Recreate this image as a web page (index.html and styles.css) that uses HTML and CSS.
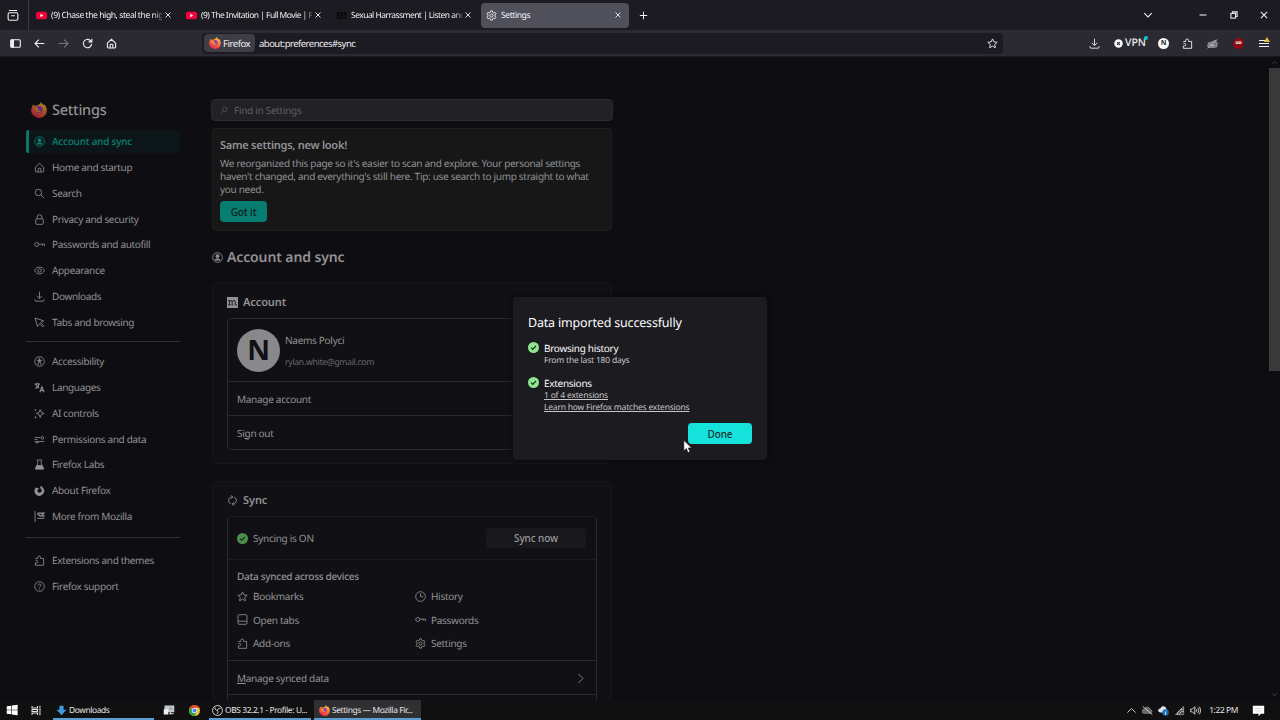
FILE: index.html
```html
<!DOCTYPE html>
<html lang="en">
<head>
    <meta charset="UTF-8">
    <meta name="viewport" content="width=device-width, initial-scale=1.0">
    <title>Settings</title>
    <link rel="stylesheet" href="styles.css">
</head>
<body>
    <svg class="sprite" width="0" height="0">
        <defs>
            <linearGradient id="fox-fill" x1="0.8" y1="0" x2="0.3" y2="1">
                <stop offset="0" stop-color="#ffd93a"/>
                <stop offset="0.45" stop-color="#ff7a2a"/>
                <stop offset="1" stop-color="#e8204e"/>
            </linearGradient>
        </defs>
        <symbol id="close" viewBox="0 0 16 16"><path d="M3 3l10 10M13 3L3 13"/></symbol>
        <symbol id="gear" viewBox="0 0 16 16"><path d="M6.800 1.200h2.400l.5 2 1.600.9 2-.6 1.200 2.100-1.400 1.500v1.800l1.400 1.500-1.200 2.100-2-.6-1.600.9-.5 2H6.800l-.5-2-1.600-.9-2 .6-1.200-2.100 1.400-1.500V7.100L1.500 5.600l1.200-2.100 2 .6 1.600-.9z"/><circle cx="8" cy="8" r="2.300"/></symbol>
        <symbol id="youtube" viewBox="0 0 16 16"><rect x="0" y="2.500" width="16" height="11" rx="3" fill="#f5003c" stroke="none"/><path d="M6.400 5.600v4.800L10.600 8z" fill="#fff" stroke="none"/></symbol>
        <symbol id="home" viewBox="0 0 16 16"><path d="M2 7.500L8 1.800l6 5.700v5.700a1.300 1.300 0 0 1-1.300 1.300H3.300A1.300 1.300 0 0 1 2 13.200zM6 14.500V10a1 1 0 0 1 1-1h2a1 1 0 0 1 1 1v4.500"/></symbol>
        <symbol id="search" viewBox="0 0 16 16"><circle cx="6.500" cy="6.500" r="4.700"/><path d="M10 10l5 5"/></symbol>
        <symbol id="search-flip" viewBox="0 0 16 16"><circle cx="9.500" cy="6.500" r="4.500"/><path d="M6 10l-4.500 4.500"/></symbol>
        <symbol id="lock" viewBox="0 0 16 16"><rect x="2.500" y="7" width="11" height="8" rx="1.500"/><path d="M4.500 7V4.500a3.500 3.500 0 0 1 7 0V7"/></symbol>
        <symbol id="key" viewBox="0 0 16 16"><circle cx="4" cy="8" r="2.900"/><path d="M7 7.500h8.500v3M12.500 7.500v2"/></symbol>
        <symbol id="eye" viewBox="0 0 16 16"><path d="M.8 8C2.500 4.600 5 3 8 3s5.500 1.600 7.200 5c-1.700 3.400-4.200 5-7.200 5S2.500 11.400.8 8z"/><circle cx="8" cy="8" r="2.500"/></symbol>
        <symbol id="download" viewBox="0 0 16 16"><path d="M8 1v9.500M4 7l4 4 4-4M1.500 12v1.500a1.300 1.300 0 0 0 1.300 1.300h10.400a1.300 1.300 0 0 0 1.300-1.300V12"/></symbol>
        <symbol id="pointer" viewBox="0 0 16 16"><path d="M1.500 1.500l12.500 4-4.500 2.700 4.700 4.700-1.600 1.600-4.700-4.700L5 14z"/></symbol>
        <symbol id="person" viewBox="0 0 16 16"><circle cx="8" cy="8" r="7"/><circle cx="8" cy="6" r="2.200" fill="currentColor"/><path d="M4 12.300c0-1.800 1-2.800 2.400-2.800h3.200c1.400 0 2.400 1 2.400 2.800z" fill="currentColor" stroke="none"/></symbol>
        <symbol id="access" viewBox="0 0 16 16"><circle cx="8" cy="8" r="7"/><circle cx="8" cy="4.300" r=".8" fill="currentColor"/><path d="M4 6.300h8M6.700 6.500v3L5.500 13M9.300 6.500v3l1.200 3.500M8 6v3.500"/></symbol>
        <symbol id="lang" viewBox="0 0 16 16"><path d="M.8 3h8M4.800 1v2M2 9.500C5 8 6.800 6 7.300 3M2.500 3.500C3.500 6 5 7.500 7 9M8.500 15l3-8 3.200 8M9.500 12.400h4.200" stroke-width="1.600"/></symbol>
        <symbol id="spark" viewBox="0 0 16 16"><path d="M9 2.500l1.400 3.800L14.800 8l-4.400 1.700L9 13.800 7.400 9.700 3.500 8l3.900-1.700z"/><path d="M1 3h2M2 2v2M1 13.500h2.500M2.200 12.300v2.500"/></symbol>
        <symbol id="perms" viewBox="0 0 16 16"><path d="M1 5h8M1 11h14M1 8h4"/><circle cx="12.200" cy="5.500" r="2"/><path d="M3 11v1.800h3V11"/></symbol>
        <symbol id="flask" viewBox="0 0 16 16"><path d="M4 1.500h8M5.500 2v5L2 13.500V14.500h12v-1L10.500 7V2"/><path d="M4.500 9.500h7l2.200 5H2.300z" fill="currentColor"/></symbol>
        <symbol id="foxmono" viewBox="0 0 16 16"><path d="M3 3c.2.900.6 1.400 1.200 1.900C5.600 4 7 4.400 7.500 5.500 5.800 5.800 5 6.800 5 8.200c0 1.700 1.300 2.900 3 2.900s3.200-1.300 3.200-3.200c0-1.600-.8-2.500-2-3.200C9 3.500 9.200 2 10 1c1 1 2.100 1.700 3.200 3.200A7 7 0 1 1 2 4.700z" fill="currentColor" stroke="none"/></symbol>
        <symbol id="mozflag" viewBox="0 0 16 16"><path d="M1.500 0v16"/><path d="M5 3h9.500l-2.500 2 2.500 2H9L5 4.500M5 10.500h10" stroke-width="1.700"/></symbol>
        <symbol id="puzzle" viewBox="0 0 16 16"><path d="M2 5h3.500V3.500a2 2 0 0 1 4 0V5H14v10H2v-3.500h1.500a1.900 1.900 0 0 0 0-3.800H2"/></symbol>
        <symbol id="help" viewBox="0 0 16 16"><circle cx="8" cy="8" r="7"/><path d="M5.800 6.500c0-1.300 1-2.200 2.200-2.200s2.200.8 2.200 2c0 1.500-2.200 1.700-2.200 3.400M8 11v1.300"/></symbol>
        <symbol id="star" viewBox="0 0 16 16"><path d="M8 1.300l2 4.400 4.800.5-3.600 3.200 1 4.800L8 11.800l-4.200 2.400 1-4.800L1.200 6.200 6 5.700z"/></symbol>
        <symbol id="clock" viewBox="0 0 16 16"><circle cx="8" cy="8" r="7"/><path d="M8 3.500V8.500h4"/></symbol>
        <symbol id="tabs" viewBox="0 0 16 16"><rect x="1.500" y="1" width="13" height="14" rx="1.500"/><path d="M1.500 10.500h13"/></symbol>
        <symbol id="sync" viewBox="0 0 16 16"><path d="M5.500 13A5.500 5.500 0 0 1 5.500 3L8 3M6 .5L8.500 3 6 5.500M10.500 3a5.500 5.500 0 0 1 0 10H8M10 10.500L7.500 13l2.500 2.500"/></symbol>
        <symbol id="check" viewBox="0 0 16 16"><circle cx="8" cy="8" r="8" fill="currentColor" stroke="none"/><path d="M4.500 8.300l2.400 2.400 4.600-4.900" stroke="#14301a" stroke-width="1.700"/></symbol>
        <symbol id="moz" viewBox="0 0 16 16"><rect width="16" height="16" fill="currentColor" stroke="none"/><path d="M1.500 5h2v6M1.500 11.500h4M3.500 7c1-2.500 4-2.500 4 0v4M7.500 7c1-2.500 4.500-2.500 4.500 0v4.500h2.500M6.500 11.500h2.500" stroke="#111014" stroke-width="1.300"/></symbol>
        <symbol id="firefox" viewBox="0 0 16 16"><path d="M2.300 2.500l1.500 1.400c.9-.5 1.800-.6 2.600-.4C7.300 2.600 8.500 2 9.200 2c.1-.8.400-1.400.9-2 .5 1.500 1.500 2 2.300 2.900l1-.4c1.500 1.700 2.400 3.600 2.400 5.900A7.800 7.800 0 1 1 .9 5c.2-1 .7-1.700 1.400-2.500z" fill="url(#fox-fill)" stroke="none"/><circle cx="8" cy="7.500" r="3.500" fill="#8a3fc0" stroke="none"/><path d="M3.800 6c1.500-.8 2.800-.6 3.800.2L6.500 7.500c.8 1.300 2.200 1.400 3.500 1-.8 2.300-4.900 2.300-5.700-.4z" fill="#ff9430" stroke="none"/></symbol>
    </svg>

    <div class="tab-bar">
        <div class="firefox-view">
            <svg class="icon" viewBox="0 0 16 16"><rect x="1.500" y="5" width="13" height="10" rx="2"/><path d="M2.500 2h11M5.500 9h5"/></svg>
        </div>
        <div class="tab">
            <svg class="icon favicon"><use href="#youtube"/></svg>
            <span class="tab-title faded">(9) Chase the high, steal the nig</span>
            <svg class="icon tab-close"><use href="#close"/></svg>
        </div>
        <div class="tab">
            <svg class="icon favicon"><use href="#youtube"/></svg>
            <span class="tab-title faded tight">(9) The Invitation | Full Movie | F</span>
            <svg class="icon tab-close"><use href="#close"/></svg>
        </div>
        <div class="tab">
            <svg class="icon favicon" viewBox="0 0 16 16"><path d="M1 4.500h4M6 4.500h4M11 4.500h4M1 8h4M6 8h4M11 8h4M1 11.500h4M6 11.500h4M11 11.500h4" stroke="#0a0a0c" stroke-width="3"/></svg>
            <span class="tab-title faded tight">Sexual Harrassment | Listen and</span>
            <svg class="icon tab-close"><use href="#close"/></svg>
        </div>
        <div class="tab active">
            <svg class="icon favicon"><use href="#gear"/></svg>
            <span class="tab-title">Settings</span>
            <svg class="icon tab-close"><use href="#close"/></svg>
        </div>
        <svg class="icon new-tab" viewBox="0 0 16 16"><path d="M8 1.500v13M1.500 8h13"/></svg>
        <div class="window-buttons">
            <svg class="icon" viewBox="0 0 16 16"><path d="M2 5l6 6 6-6"/></svg>
            <svg class="icon gap-minimize" viewBox="0 0 16 16"><path d="M2.500 8h11"/></svg>
            <svg class="icon gap-button" viewBox="0 0 16 16"><rect x="3" y="5.500" width="7.500" height="7.500"/><path d="M5.500 5.500V3H13v7.500h-2.500"/></svg>
            <svg class="icon gap-button" viewBox="0 0 16 16"><path d="M3 3l10 10M13 3L3 13"/></svg>
        </div>
    </div>

    <div class="toolbar">
        <div class="nav-buttons">
            <svg class="icon" viewBox="0 0 16 16"><rect x="1" y="2.500" width="14" height="11" rx="1.500"/><path d="M2 3h3v10H2z" fill="currentColor"/></svg>
            <svg class="icon" viewBox="0 0 16 16"><path d="M15 8H1.800M7 2.500L1.500 8 7 13.500"/></svg>
            <svg class="icon disabled" viewBox="0 0 16 16"><path d="M1 8h13.200M9 2.500L14.500 8 9 13.500"/></svg>
            <svg class="icon" viewBox="0 0 16 16"><path d="M14 8.500A6 6 0 1 1 12 3.600L14 5.500M14.300 1v4.700H9.500"/></svg>
            <svg class="icon"><use href="#home"/></svg>
        </div>
        <div class="url-bar">
            <div class="identity"><svg class="icon"><use href="#firefox"/></svg><span>Firefox</span></div>
            <span class="url">about:preferences#sync</span>
            <svg class="icon url-star"><use href="#star"/></svg>
        </div>
        <div class="extensions">
            <svg class="icon"><use href="#download"/></svg>
            <div class="vpn">
                <svg class="icon" viewBox="0 0 16 16"><circle cx="8" cy="8" r="7.500" fill="#fbfbfe" stroke="none"/><path d="M5.500 5.500l5 5M10.500 5.500l-5 5" stroke="#2b2a33" stroke-width="2"/></svg>
                <span>VPN</span><i class="vpn-dot"></i>
            </div>
            <div class="profile">N</div>
            <svg class="icon ext-puzzle"><use href="#puzzle"/></svg>
            <svg class="icon ext-gray" viewBox="0 0 16 16"><path d="M1 13l1-6 4-1 7-3v3l2 1-1 6-7 1z" fill="#77777d" stroke="#96969c"/><path d="M4 9l7 2M1 15L15 2M5 11h6"/></svg>
            <div class="ublock">uo</div>
            <div class="menu"><i></i><i></i><i></i><b></b></div>
        </div>
    </div>

    <div class="page">
        <nav class="sidebar">
            <h1><svg class="icon"><use href="#firefox"/></svg><span>Settings</span></h1>
            <a class="nav-item selected"><svg class="icon"><use href="#person"/></svg>Account and sync</a>
            <a class="nav-item"><svg class="icon"><use href="#home"/></svg>Home and startup</a>
            <a class="nav-item"><svg class="icon"><use href="#search"/></svg>Search</a>
            <a class="nav-item"><svg class="icon"><use href="#lock"/></svg>Privacy and security</a>
            <a class="nav-item"><svg class="icon"><use href="#key"/></svg>Passwords and autofill</a>
            <a class="nav-item"><svg class="icon"><use href="#eye"/></svg>Appearance</a>
            <a class="nav-item"><svg class="icon"><use href="#download"/></svg>Downloads</a>
            <a class="nav-item"><svg class="icon"><use href="#pointer"/></svg>Tabs and browsing</a>
            <hr>
            <a class="nav-item"><svg class="icon"><use href="#access"/></svg>Accessibility</a>
            <a class="nav-item"><svg class="icon"><use href="#lang"/></svg>Languages</a>
            <a class="nav-item"><svg class="icon"><use href="#spark"/></svg>AI controls</a>
            <a class="nav-item"><svg class="icon"><use href="#perms"/></svg>Permissions and data</a>
            <a class="nav-item"><svg class="icon"><use href="#flask"/></svg>Firefox Labs</a>
            <a class="nav-item"><svg class="icon"><use href="#foxmono"/></svg>About Firefox</a>
            <a class="nav-item"><svg class="icon"><use href="#mozflag"/></svg>More from Mozilla</a>
            <hr class="second">
            <a class="nav-item"><svg class="icon"><use href="#puzzle"/></svg>Extensions and themes</a>
            <a class="nav-item"><svg class="icon"><use href="#help"/></svg>Firefox support</a>
        </nav>

        <main>
            <div class="search-box"><svg class="icon"><use href="#search-flip"/></svg><span>Find in Settings</span></div>
            <section class="notice">
                <h3>Same settings, new look!</h3>
                <p>We reorganized this page so it's easier to scan and explore. Your personal settings<br>haven't changed, and everything's still here. Tip: use search to jump straight to what<br>you need.</p>
                <button>Got it</button>
            </section>
            <h2><svg class="icon"><use href="#person"/></svg><span>Account and sync</span></h2>

            <section class="card account">
                <h3><svg class="icon"><use href="#moz"/></svg>Account</h3>
                <div class="box">
                    <div class="user">
                        <div class="avatar">N</div>
                        <div class="user-text">
                            <div>Naems Polyci</div>
                            <div class="email">rylan.white@gmail.com</div>
                        </div>
                    </div>
                    <div class="row">Manage account</div>
                    <div class="row"><span>Si<u>g</u>n out</span></div>
                </div>
            </section>

            <section class="card sync">
                <h3><svg class="icon"><use href="#sync"/></svg>Sync</h3>
                <div class="box">
                    <div class="sync-status">
                        <svg class="icon ok"><use href="#check"/></svg>
                        <span>Syncing is ON</span>
                        <button>Sync now</button>
                    </div>
                    <div class="synced">
                        <h4>Data synced across devices</h4>
                        <div class="synced-grid">
                            <span><svg class="icon"><use href="#star"/></svg>Bookmarks</span>
                            <span><svg class="icon"><use href="#clock"/></svg>History</span>
                            <span><svg class="icon"><use href="#tabs"/></svg>Open tabs</span>
                            <span><svg class="icon"><use href="#key"/></svg>Passwords</span>
                            <span><svg class="icon"><use href="#puzzle"/></svg>Add-ons</span>
                            <span><svg class="icon"><use href="#gear"/></svg>Settings</span>
                        </div>
                    </div>
                    <div class="row"><span><u>M</u>anage synced data</span><svg class="icon" viewBox="0 0 16 16"><path d="M5 1.500L11.500 8 5 14.500"/></svg></div>
                    <div class="row"></div>
                </div>
            </section>
        </main>

        <div class="scrollbar">
            <svg class="icon" viewBox="0 0 16 16"><path d="M3 11l5-6 5 6"/></svg>
            <div class="thumb"></div>
            <svg class="icon arrow-down" viewBox="0 0 16 16"><path d="M3 5l5 6 5-6"/></svg>
        </div>

        <div class="dialog">
            <h2>Data imported successfully</h2>
            <div class="result">
                <svg class="icon ok"><use href="#check"/></svg>
                <div>
                    <div class="result-title">Browsing history</div>
                    <div class="small">From the last 180 days</div>
                </div>
            </div>
            <div class="result">
                <svg class="icon ok"><use href="#check"/></svg>
                <div>
                    <div class="result-title">Extensions</div>
                    <div class="small"><a>1 of 4 extensions</a></div>
                    <div class="small"><a>Learn how Firefox matches extensions</a></div>
                </div>
            </div>
            <div class="dialog-buttons"><button>Done</button></div>
        </div>
        <svg class="cursor" viewBox="0 0 12 18"><path d="M1 1v12.500l3-2.600 2 4.800 2.300-1-2-4.600h4z" fill="#fff" stroke="#000" stroke-width="0.600"/></svg>
    </div>

    <div class="taskbar">
        <svg class="start" viewBox="0 0 16 16"><path d="M1 3l6-.8v5.300H1zM7.800 2.100L15.500 1v6.500H7.800zM1 8.300h6v5.400L1 12.900zM7.800 8.300h7.700V15l-7.700-1.100z" fill="#fff"/></svg>
        <svg class="icon taskview" viewBox="0 0 16 16"><path d="M1.500 1.500v3h8v-3M1.500 14.500v-3h8v3M1.500 6.500h8v3h-8zM13 1v4M13 8.500V15M11.500 6.800h3"/></svg>
        <div class="task downloads"><svg class="icon" viewBox="0 0 16 16"><path d="M5 1h6v6h4l-7 8-7-8h4z" fill="#3f9be0" stroke="none"/></svg><span>Downloads</span></div>
        <svg class="pc" viewBox="0 0 16 16"><rect x="2" y="2" width="13" height="9" fill="#c6cace"/><rect x="1" y="7" width="6" height="7" fill="#f0f0f0"/><path d="M8 13h6M10 11v2" stroke="#ddd" stroke-width="1.500"/><path d="M8 4h5v4H8z" fill="#9fb0bb"/></svg>
        <svg class="chrome" viewBox="0 0 16 16"><circle cx="8" cy="8" r="8" fill="#f9c32b"/><path d="M8 8L1.100 4A8 8 0 0 0 8 16l3.500-6z" fill="#2ba24c"/><path d="M1.100 4a8 8 0 0 1 13.800 0H8v4z" fill="#e34133"/><circle cx="8" cy="8" r="3.900" fill="#fff"/><circle cx="8" cy="8" r="3" fill="#4285f4"/></svg>
        <div class="task obs"><svg class="icon" viewBox="0 0 16 16"><circle cx="8" cy="8" r="7.200"/><path d="M4.500 3.500c-.5 2.500.8 4.200 3.500 4.500M12.500 5c-2.500-.7-4.200.5-4.500 3M7 13c2-1.500 2.200-3.300 1-5"/></svg><span>OBS 32.2.1 - Profile: U...</span></div>
        <div class="task current"><svg class="icon"><use href="#firefox"/></svg><span>Settings — Mozilla Fir...</span></div>
        <div class="tray">
            <svg class="icon" viewBox="0 0 16 16"><path d="M2 11l6-6 6 6"/></svg>
            <svg class="icon" viewBox="0 0 16 16"><path d="M3 12a3 3 0 0 1 .5-6A4.500 4.500 0 0 1 12 6.500a3 3 0 0 1 1 5.500z" fill="#66666a" stroke="#888"/><path d="M1 2l14 12" stroke="#ddd"/></svg>
            <svg class="icon" viewBox="0 0 16 16"><path d="M3 11a3 3 0 0 1 .5-6A4.500 4.500 0 0 1 12 5l2 6z" fill="#dce9f5" stroke="none"/><circle cx="11" cy="11" r="4.700" fill="#1d6fb8" stroke="none"/><path d="M11 8.500v.8M11 10.500V14" stroke="#fff"/></svg>
            <svg class="icon" viewBox="0 0 16 16"><path d="M2 14L14 2v12z" fill="#3a3a3e" stroke="#888"/><path d="M5 14c0-4 4-8 9-8M8 14c0-3 3-5 6-5"/></svg>
            <svg class="icon" viewBox="0 0 16 16"><path d="M1 6h2.500L7 2.500v11L3.500 10H1zM9 6c1 1.300 1 2.700 0 4M11.200 4c2 2.500 2 5.500 0 8M13.500 2.500c2.500 3.500 2.500 7.500 0 11"/></svg>
            <span class="clock">1:22 PM</span>
            <svg class="note" viewBox="0 0 16 16"><path d="M1 2h14v10h-4l-3 3v-3H1z" fill="#fff"/><path d="M4 5.500h8M4 8.500h8" stroke="#ccc"/></svg>
        </div>
    </div>
</body>
</html>
```
FILE: styles.css
```css
*{
    box-sizing: border-box;
    margin: 0;
    padding: 0;
}

body{
    width: 1280px;
    height: 720px;
    overflow: hidden;
    background-color: #0e0d11;
    color: #929295;
    font-family: "Noto Sans", "Open Sans", sans-serif;
    font-size: 10px;
    line-height: 13px;
    letter-spacing: -0.29px;
    text-rendering: geometricPrecision;
    display: flex;
    flex-direction: column;
}

.sprite{
    position: absolute;
}

.icon{
    width: 11px;
    height: 11px;
    flex: none;
    fill: none;
    stroke: currentColor;
    stroke-width: 1.3;
}

button{
    border: none;
    padding-top: 1px;
    font-family: inherit;
    font-size: 10px;
    line-height: 13px;
    letter-spacing: -0.1px;
}

h3, h4{
    font-weight: 600;
}

/* tabs */
.tab-bar{
    height: 30px;
    flex: none;
    background-color: #1c1b21;
    color: #f0f0f4;
    display: flex;
    align-items: center;
    font-size: 8.6px;
}

.firefox-view{
    width: 29px;
    height: 30px;
    flex: none;
    padding-left: 7px;
    display: flex;
    align-items: center;
    border-right: 1px solid #3b3a41;
}

.firefox-view .icon{
    width: 12px;
    height: 12px;
    stroke-width: 1.5;
}

.tab{
    width: 148px;
    height: 25px;
    margin-left: 2px;
    padding: 0 7px 0 5px;
    flex: none;
    display: flex;
    align-items: center;
    border-radius: 4px;
}

.tab.active{
    background-color: #50505b;
}

.favicon{
    margin-right: 4px;
}

.tab-title{
    flex: 1;
    min-width: 0;
    padding-top: 1px;
    white-space: nowrap;
    letter-spacing: -0.45px;
}

.tab-title.tight{
    font-size: 8.5px;
    letter-spacing: -0.54px;
}

.faded{
    -webkit-mask-image: linear-gradient(to right, #000 92%, rgba(0, 0, 0, 0.3));
    mask-image: linear-gradient(to right, #000 92%, rgba(0, 0, 0, 0.3));
}

.tab-close{
    width: 8px;
    height: 8px;
    margin-left: 2px;
    stroke-width: 1.8;
}

.new-tab{
    width: 9px;
    height: 9px;
    margin-left: 9.5px;
    stroke-width: 1.8;
}

.window-buttons{
    margin-left: auto;
    padding-right: 11px;
    display: flex;
    align-items: center;
}

.window-buttons .icon{
    width: 10px;
    height: 10px;
    stroke-width: 1.7;
}

.window-buttons .gap-minimize{
    margin-left: 45px;
}

.window-buttons .gap-button{
    margin-left: 20.5px;
}

/* toolbar */
.toolbar{
    height: 27px;
    flex: none;
    background-color: #2b2a33;
    color: #f0f0f4;
    display: flex;
    align-items: center;
    border-bottom: 1px solid #1a1920;
}

.nav-buttons{
    width: 202px;
    padding-left: 10px;
    display: flex;
    gap: 13px;
}

.nav-buttons .icon{
    stroke-width: 1.6;
}

.nav-buttons .disabled{
    color: #77767e;
}

.url-bar{
    width: 801px;
    height: 21px;
    background-color: #1c1b21;
    border-radius: 4px;
    display: flex;
    align-items: center;
    padding: 0 5px 0 2px;
}

.identity{
    width: 51px;
    height: 18px;
    background-color: #3e3d46;
    border-radius: 4px;
    display: flex;
    align-items: center;
    padding-left: 5px;
    gap: 2px;
    font-size: 9.5px;
    letter-spacing: -0.45px;
}

.identity .icon{
    width: 12px;
    height: 12px;
}

.url{
    margin-left: 4px;
    font-size: 9.5px;
    letter-spacing: -0.52px;
}

.url-star{
    margin-left: auto;
}

.extensions{
    margin-left: auto;
    padding-right: 11px;
    display: flex;
    align-items: center;
}

.vpn{
    position: relative;
    margin-left: 14px;
    display: flex;
    align-items: center;
    gap: 2px;
    letter-spacing: 0;
}

.vpn .icon{
    width: 9px;
    height: 9px;
}

.vpn span{
    font-size: 10.5px;
    font-weight: 500;
}

.vpn-dot{
    position: absolute;
    right: -2px;
    top: -1px;
    width: 4px;
    height: 4px;
    border-radius: 50%;
    background-color: #10c5d0;
}

.profile{
    width: 11px;
    height: 11px;
    margin-left: 12px;
    border-radius: 50%;
    background-color: #fbfbfe;
    color: #2b2a33;
    font-size: 7px;
    font-weight: bold;
    line-height: 11px;
    text-align: center;
    letter-spacing: 0;
}

.ext-puzzle{
    margin-left: 13px;
}

.ext-gray{
    margin-left: 14px;
    color: #b5b5ba;
}

.ublock{
    width: 11px;
    height: 11px;
    margin-left: 15px;
    border-radius: 50%;
    background-color: #8c0c14;
    color: #fff;
    font-size: 5px;
    font-weight: bold;
    line-height: 10px;
    text-align: center;
}

.menu{
    position: relative;
    width: 10px;
    margin-left: 15px;
    display: flex;
    flex-direction: column;
    gap: 2px;
}

.menu i{
    height: 1px;
    background-color: #f0f0f4;
}

.menu b{
    position: absolute;
    right: -1px;
    top: -3px;
    border-left: 3px solid transparent;
    border-right: 3px solid transparent;
    border-bottom: 5px solid #e5bd35;
}

/* settings page */
.page{
    position: relative;
    height: 643px;
    flex: none;
    overflow: hidden;
    display: flex;
}

.sidebar{
    width: 180px;
    padding: 43px 0 0 26px;
    flex: none;
    letter-spacing: -0.34px;
}

.sidebar h1{
    height: 20px;
    margin-bottom: 10px;
    padding: 1px 0 0 5px;
    display: flex;
    align-items: center;
    gap: 5px;
    font-size: 14.5px;
    font-weight: 500;
    letter-spacing: -0.25px;
}

.sidebar h1 .icon{
    width: 16px;
    height: 16px;
    margin-top: -2px;
    opacity: 0.65;
}

.nav-item{
    height: 23px;
    margin-bottom: 2.86px;
    padding-left: 7.5px;
    display: flex;
    align-items: center;
    gap: 7.5px;
    white-space: nowrap;
}

.nav-item .icon, .synced .icon{
    stroke-width: 1.2;
}

.selected{
    padding-left: 4.5px;
    border-left: 3px solid #06786c;
    border-radius: 2px;
    background-color: #0c1618;
    color: #078172;
    font-weight: 500;
    letter-spacing: -0.22px;
}

.sidebar hr{
    border: none;
    border-top: 1px solid #2f2f34;
    margin: 7px 0 8px;
}

.sidebar hr.second{
    margin: 9px 0 11px;
}

main{
    width: 402px;
    margin-left: 31px;
    padding-top: 42px;
    flex: none;
}

.search-box{
    height: 22px;
    padding-left: 8px;
    display: flex;
    align-items: center;
    gap: 6px;
    background-color: #222126;
    border: 1px solid #2b2a30;
    border-radius: 4px;
    color: #5f5f64;
}

.search-box .icon{
    width: 8px;
    height: 8px;
}

.notice{
    height: 103px;
    margin: 7px 1px 0;
    padding: 9.5px 7px 8px;
    background-color: #171718;
    border: 1px solid #1f1f21;
    border-radius: 4px;
}

.notice h3{
    font-size: 11px;
    line-height: 14px;
    letter-spacing: -0.25px;
}

.notice p{
    margin: 4px 0 5px;
    white-space: nowrap;
    line-height: 13.3px;
    letter-spacing: -0.3px;
}

.notice button{
    width: 47px;
    height: 21px;
    background-color: #067d71;
    border-radius: 4px;
    color: #0b2220;
    font-weight: 500;
}

main h2{
    height: 20px;
    margin: 16px 0 15px 1px;
    display: flex;
    align-items: center;
    gap: 4px;
    font-size: 14px;
    font-weight: 600;
    letter-spacing: -0.12px;
}

main h2 span{
    padding-top: 1px;
}

.card{
    margin: 0 1px;
    padding: 10px 14px 0;
    background-color: #111014;
    border: 1px solid #17161a;
    border-radius: 5px;
}

.card h3{
    height: 18px;
    display: flex;
    align-items: center;
    gap: 5px;
    font-size: 11px;
    letter-spacing: -0.1px;
}

.account{
    height: 182px;
}

.box{
    border: 1px solid #2a2a2d;
    border-radius: 4px;
}

.account .box{
    margin-top: 7px;
}

.user{
    height: 62px;
    padding-left: 9px;
    display: flex;
    align-items: center;
    gap: 5px;
}

.avatar{
    width: 43px;
    height: 43px;
    border-radius: 50%;
    background-color: #89898b;
    color: #111014;
    font-size: 28px;
    font-weight: bold;
    line-height: 43px;
    text-align: center;
}

.user-text{
    padding-top: 2px;
}

.email{
    margin-top: 9px;
    font-size: 8.7px;
    letter-spacing: -0.32px;
    color: #69696d;
}

.row{
    height: 34px;
    padding: 1px 10px 0 9px;
    border-top: 1px solid #2a2a2d;
    display: flex;
    align-items: center;
    justify-content: space-between;
}

.sync{
    height: 260px;
    margin-top: 17px;
    padding-top: 9px;
}

.sync .box{
    margin-top: 7px;
    height: 230px;
    border-top-color: #1c1c1f;
}

.sync-status{
    height: 42px;
    padding: 0 10px 0 9px;
    display: flex;
    align-items: center;
    gap: 5px;
}

.sync-status .ok{
    color: #4c8c4c;
}

.sync-status button{
    width: 100px;
    height: 20px;
    margin-left: auto;
    background-color: #19191c;
    border-radius: 4px;
    color: #98989b;
    font-weight: 500;
}

.synced{
    height: 101px;
    padding: 10px 9px 0;
    border-top: 1px solid #1c1c1f;
}

.synced h4{
    font-weight: 500;
}

.synced-grid{
    margin-top: 5px;
    display: grid;
    grid-template-columns: 178px 1fr;
    grid-auto-rows: 23.5px;
    line-height: 12px;
}

.synced-grid span{
    height: 12px;
    margin-top: 2px;
    display: flex;
    align-items: center;
    gap: 5px;
}

.scrollbar{
    width: 12px;
    margin-left: auto;
    display: flex;
    flex-direction: column;
    align-items: center;
    color: #55555a;
}

.scrollbar .icon{
    width: 7px;
    height: 11px;
}

.scrollbar .arrow-down{
    margin-top: auto;
}

.thumb{
    width: 11px;
    height: 303px;
    margin-left: 1px;
    background-color: #3a3a3b;
}

/* import dialog sits above the dimmed page */
.dialog{
    position: absolute;
    left: 513px;
    top: 240px;
    width: 254px;
    height: 163px;
    padding: 16px 15px 15px;
    background-color: #1c1b20;
    border-radius: 4px;
    box-shadow: 0 0 5px #09090b;
    color: #fbfbfe;
}

.dialog h2{
    font-size: 12.5px;
    font-weight: 400;
    line-height: 20px;
    letter-spacing: -0.18px;
}

.result{
    margin-top: 8px;
    display: flex;
    gap: 5px;
}

.result + .result{
    margin-top: 9px;
}

.result .ok{
    margin-top: 1px;
    color: #8fe58f;
}

.result-title{
    line-height: 14px;
}

.small{
    font-size: 8.5px;
    line-height: 11.8px;
    letter-spacing: -0.2px;
    color: #c7c7cb;
}

.small a{
    text-decoration: underline;
}

.dialog-buttons{
    margin-top: 10px;
    display: flex;
    justify-content: flex-end;
}

.dialog button{
    width: 64px;
    height: 21px;
    background-color: #16e2dc;
    border-radius: 4px;
    color: #15302f;
    font-weight: 500;
}

.cursor{
    position: absolute;
    left: 683px;
    top: 382px;
    width: 10px;
    height: 16px;
}

/* windows taskbar */
.taskbar{
    height: 20px;
    flex: none;
    background-color: #101011;
    color: #e6e6e8;
    display: flex;
    align-items: center;
    font-size: 8.4px;
    letter-spacing: -0.38px;
}

.start{
    width: 12px;
    height: 12px;
    margin-left: 6px;
}

.taskview{
    margin: 0 11px 0 13px;
    stroke-width: 1.5;
}

.task{
    height: 20px;
    padding: 2px 0 0 3px;
    display: flex;
    align-items: center;
    gap: 2px;
    border-bottom: 2px solid #5a9fd4;
    white-space: nowrap;
}

.downloads{
    width: 101px;
}

.pc{
    width: 12px;
    height: 12px;
    margin-left: 9px;
}

.chrome{
    width: 11px;
    height: 11px;
    margin: 0 9px 0 14px;
}

.obs{
    width: 102px;
}

.current{
    width: 107px;
    margin-left: 3px;
    padding-left: 5px;
    background-color: #303032;
}

.tray{
    margin-left: auto;
    padding-right: 15px;
    display: flex;
    align-items: center;
    gap: 5px;
}

.clock{
    margin: 0 9px 0 3px;
    letter-spacing: -0.38px;
}

.note{
    width: 13px;
    height: 13px;
}
```
